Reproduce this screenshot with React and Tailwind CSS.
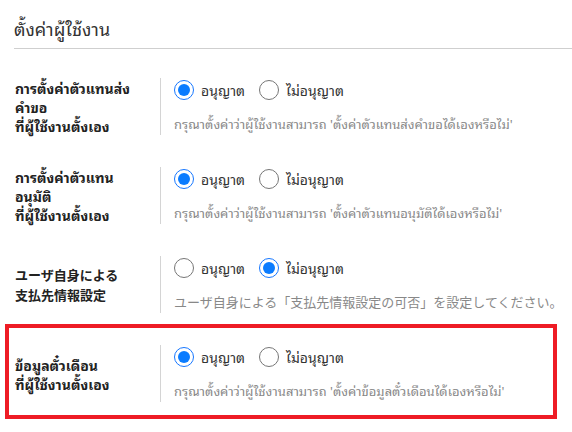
import React, { useState } from "react";

const ROWS = [
  {
    id: "proxy-request",
    label: ["การตั้งค่าตัวแทนส่ง", "คำขอ", "ที่ผู้ใช้งานตั้งเอง"],
    value: "allow",
    note: "กรุณาตั้งค่าว่าผู้ใช้งานสามารถ 'ตั้งค่าตัวแทนส่งคำขอได้เองหรือไม่'",
  },
  {
    id: "proxy-approve",
    label: ["การตั้งค่าตัวแทน", "อนุมัติ", "ที่ผู้ใช้งานตั้งเอง"],
    value: "allow",
    note: "กรุณาตั้งค่าว่าผู้ใช้งานสามารถ 'ตั้งค่าตัวแทนอนุมัติได้เองหรือไม่'",
  },
  {
    id: "payee",
    label: ["ユーザ自身による", "支払先情報設定"],
    value: "deny",
    note: "ユーザ自身による「支払先情報設定の可否」を設定してください。",
    ja: true,
  },
  {
    id: "ticket",
    label: ["ข้อมูลตั๋วเดือน", "ที่ผู้ใช้งานตั้งเอง"],
    value: "allow",
    note: "กรุณาตั้งค่าว่าผู้ใช้งานสามารถ 'ตั้งค่าข้อมูลตั๋วเดือนได้เองหรือไม่'",
    highlight: true,
  },
];

function Radio({ checked, label, onClick }) {
  return (
    <button type="button" onClick={onClick} className="flex items-center gap-[7px]">
      <span
        className={`flex h-[20px] w-[20px] items-center justify-center rounded-full border-[1.5px] bg-white ${
          checked ? "border-[#1677ff]" : "border-[#767676]"
        }`}
      >
        {checked && <span className="h-[12px] w-[12px] rounded-full bg-[#0b7cff]" />}
      </span>
      <span className="text-[14px] leading-[20px] text-[#333]">{label}</span>
    </button>
  );
}

function SettingRow({ row }) {
  const [value, setValue] = useState(row.value);
  return (
    <div className="relative flex items-center py-4">
      {row.highlight && (
        <div className="pointer-events-none absolute -left-[9px] right-[15px] -top-[5px] -bottom-[1px] border-4 border-[#ee1c25]" />
      )}
      <div
        className={`w-[146px] shrink-0 pl-[1px] font-bold leading-[19px] text-[#222] ${
          row.ja ? "text-[13px] leading-[20px]" : "text-[14px]"
        }`}
      >
        {row.label.map((l, i) => (
          <div key={i}>{l}</div>
        ))}
      </div>
      <div className="flex h-[57px] flex-col border-l border-[#d4d4d4] pl-[13px] pt-[2px]">
        <div className="flex items-center gap-[14px]">
          <Radio checked={value === "allow"} label="อนุญาต" onClick={() => setValue("allow")} />
          <Radio checked={value === "deny"} label="ไม่อนุญาต" onClick={() => setValue("deny")} />
        </div>
        <div className="mt-[15px] whitespace-nowrap text-[13px] leading-[18px] text-[#888]">{row.note}</div>
      </div>
    </div>
  );
}

export default function App() {
  return (
    <div
      className="min-h-screen bg-white pl-[14px]"
      style={{ fontFamily: '"Noto Sans Thai Looped", "Noto Sans Thai", "Noto Sans", "Noto Sans CJK JP", sans-serif' }}
    >
      <h1 className="pt-[15px] pb-[7px] text-[18px] font-normal leading-[26px] text-[#333]">ตั้งค่าผู้ใช้งาน</h1>
      <div className="border-t border-[#cfcfcf]" />
      <div className="pt-[13px]">
        {ROWS.map((row) => (
          <SettingRow key={row.id} row={row} />
        ))}
      </div>
    </div>
  );
}
